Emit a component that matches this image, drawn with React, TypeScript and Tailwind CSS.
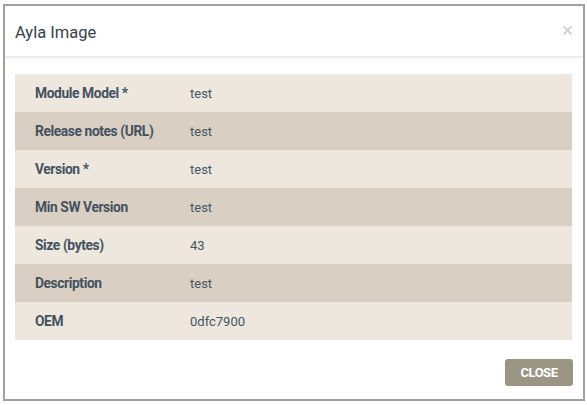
import React from "react";

const rows: [string, string][] = [
  ["Module Model *", "test"],
  ["Release notes (URL)", "test"],
  ["Version *", "test"],
  ["Min SW Version", "test"],
  ["Size (bytes)", "43"],
  ["Description", "test"],
  ["OEM", "0dfc7900"],
];

export default function App() {
  return (
    <div className="w-[587px] h-[405px] bg-white pt-[4px] pl-[3px]" style={{ fontFamily: "Roboto, 'Liberation Sans', sans-serif" }}>
      <div className="w-[582px] h-[397px] border-2 border-[#a0a0a0] bg-white flex flex-col">
        <div className="h-[52px] flex items-center justify-between pl-[10px] pr-[10px] border-b-2 border-[#ebebeb] shrink-0">
          <span className="text-[16.5px] text-[#36414d] leading-none pt-[5px]">Ayla Image</span>
          <span className="text-[20px] text-[#cfcfcf] leading-none -mt-[3px]">×</span>
        </div>
        <div className="px-[10px] pt-[16px]">
          <div className="w-[557px]">
            {rows.map(([k, v], i) => (
              <div
                key={k}
                className={`flex items-center h-[38px] pt-[1px] ${i % 2 === 0 ? "bg-[#ede7de]" : "bg-[#d9d0c3]"}`}
              >
                <div className="w-[175px] pl-[20px] text-[13.8px] font-bold text-[#445260] tracking-[-0.4px]">{k}</div>
                <div className="text-[13px] text-[#465564]">{v}</div>
              </div>
            ))}
          </div>
        </div>
        <div className="flex justify-end pr-[10px] pt-[19px]">
          <button className="w-[68px] h-[27px] rounded-[3px] bg-[#9a9683] text-white text-[13px] font-bold tracking-[-0.5px]">
            CLOSE
          </button>
        </div>
      </div>
    </div>
  );
}
